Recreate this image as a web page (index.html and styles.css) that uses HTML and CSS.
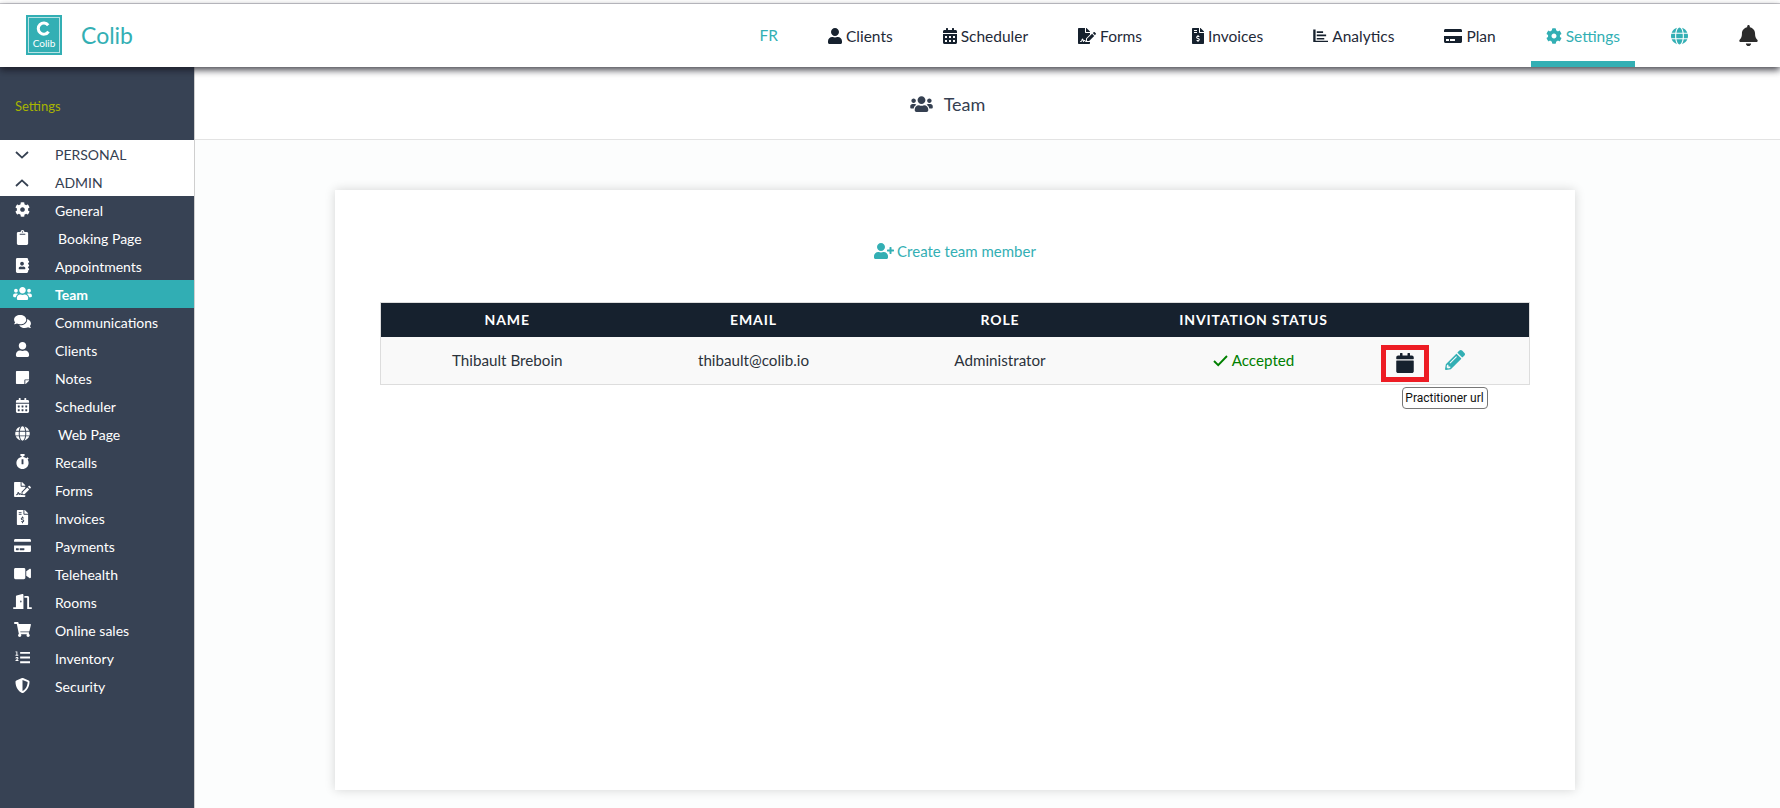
FILE: index.html
```html
<!DOCTYPE html>
<html lang="en">
<head>
<meta charset="utf-8">
<title>Colib - Team</title>
<link rel="stylesheet" href="styles.css">
</head>
<body>
<svg class="sprite" aria-hidden="true">
<symbol id="i-user" viewBox="0 0 448 512"><path d="M224 256c70.7 0 128-57.3 128-128S294.7 0 224 0 96 57.3 96 128s57.3 128 128 128zm89.6 32h-16.7c-22.2 10.2-46.9 16-72.9 16s-50.6-5.8-72.9-16h-16.7C60.2 288 0 348.2 0 422.4V464c0 26.5 21.5 48 48 48h352c26.5 0 48-21.5 48-48v-41.6c0-74.2-60.2-134.4-134.4-134.4z"/></symbol>
<symbol id="i-calalt" viewBox="0 0 448 512"><path d="M0 464c0 26.5 21.5 48 48 48h352c26.5 0 48-21.5 48-48V192H0v272zm320-196c0-6.6 5.4-12 12-12h40c6.6 0 12 5.4 12 12v40c0 6.6-5.4 12-12 12h-40c-6.6 0-12-5.4-12-12v-40zm0 128c0-6.6 5.4-12 12-12h40c6.6 0 12 5.4 12 12v40c0 6.6-5.4 12-12 12h-40c-6.6 0-12-5.4-12-12v-40zM192 268c0-6.6 5.4-12 12-12h40c6.6 0 12 5.4 12 12v40c0 6.6-5.4 12-12 12h-40c-6.6 0-12-5.4-12-12v-40zm0 128c0-6.6 5.4-12 12-12h40c6.6 0 12 5.4 12 12v40c0 6.6-5.4 12-12 12h-40c-6.6 0-12-5.4-12-12v-40zM64 268c0-6.6 5.4-12 12-12h40c6.6 0 12 5.4 12 12v40c0 6.6-5.4 12-12 12H76c-6.6 0-12-5.4-12-12v-40zm0 128c0-6.6 5.4-12 12-12h40c6.6 0 12 5.4 12 12v40c0 6.6-5.4 12-12 12H76c-6.6 0-12-5.4-12-12v-40zM400 64h-48V16c0-8.8-7.2-16-16-16h-32c-8.8 0-16 7.2-16 16v48H160V16c0-8.8-7.2-16-16-16h-32c-8.8 0-16 7.2-16 16v48H48C21.5 64 0 85.5 0 112v48h448v-48c0-26.5-21.5-48-48-48z"/></symbol>
<symbol id="i-cal" viewBox="0 0 448 512"><path d="M12 192h424c6.6 0 12 5.4 12 12v260c0 26.5-21.5 48-48 48H48c-26.5 0-48-21.5-48-48V204c0-6.6 5.4-12 12-12zm436-44v-36c0-26.5-21.5-48-48-48h-48V12c0-6.6-5.4-12-12-12h-40c-6.6 0-12 5.4-12 12v52H160V12c0-6.6-5.4-12-12-12h-40c-6.6 0-12 5.4-12 12v52H48C21.5 64 0 85.5 0 112v36c0 6.6 5.4 12 12 12h424c6.6 0 12-5.4 12-12z"/></symbol>
<symbol id="i-cog" viewBox="0 0 512 512"><path d="M487.4 315.7l-42.6-24.6c4.3-23.2 4.3-47 0-70.2l42.6-24.6c4.9-2.8 7.1-8.6 5.5-14-11.1-35.6-30-67.8-54.7-94.6-3.8-4.1-10-5.1-14.8-2.3L380.8 110c-17.9-15.4-38.5-27.3-60.8-35.1V25.8c0-5.6-3.9-10.5-9.4-11.7-36.7-8.2-74.3-7.8-109.2 0-5.5 1.2-9.4 6.1-9.4 11.7V75c-22.2 7.9-42.8 19.8-60.8 35.1L88.7 85.5c-4.9-2.8-11-1.9-14.8 2.3-24.7 26.7-43.6 58.9-54.7 94.6-1.7 5.4.6 11.2 5.5 14L67.3 221c-4.3 23.2-4.3 47 0 70.2l-42.6 24.6c-4.9 2.8-7.1 8.6-5.5 14 11.1 35.6 30 67.8 54.7 94.6 3.8 4.1 10 5.1 14.8 2.3l42.6-24.6c17.9 15.4 38.5 27.3 60.8 35.1v49.2c0 5.6 3.9 10.5 9.4 11.7 36.7 8.2 74.3 7.8 109.2 0 5.5-1.2 9.4-6.1 9.4-11.7v-49.2c22.2-7.9 42.8-19.8 60.8-35.1l42.6 24.6c4.9 2.8 11 1.9 14.8-2.3 24.7-26.7 43.6-58.9 54.7-94.6 1.5-5.5-.7-11.3-5.6-14.1zM256 336c-44.1 0-80-35.9-80-80s35.9-80 80-80 80 35.9 80 80-35.9 80-80 80z"/></symbol>
<symbol id="i-users" viewBox="0 0 640 512"><path d="M96 224c35.3 0 64-28.7 64-64s-28.7-64-64-64-64 28.7-64 64 28.7 64 64 64zm448 0c35.3 0 64-28.7 64-64s-28.7-64-64-64-64 28.7-64 64 28.7 64 64 64zm32 32h-64c-17.6 0-33.5 7.1-45.1 18.6 40.3 22.1 68.9 62 75.1 109.4h66c17.7 0 32-14.3 32-32v-32c0-35.3-28.7-64-64-64zm-256 0c61.9 0 112-50.1 112-112S381.9 32 320 32 208 82.1 208 144s50.1 112 112 112zm76.8 32h-8.3c-20.8 10-43.9 16-68.5 16s-47.6-6-68.5-16h-8.3C179.6 288 128 339.6 128 403.2V432c0 26.5 21.5 48 48 48h288c26.5 0 48-21.5 48-48v-28.8c0-63.6-51.6-115.2-115.2-115.2zm-223.7-13.4C161.5 263.1 145.6 256 128 256H64c-35.3 0-64 28.7-64 64v32c0 17.7 14.3 32 32 32h65.9c6.3-47.4 34.9-87.3 75.2-109.4z"/></symbol>
<symbol id="i-globe" viewBox="0 0 496 512"><path d="M336.5 160C322 70.7 287.8 8 248 8s-74 62.7-88.5 152h177zM152 256c0 22.2 1.2 43.5 3.3 64h185.3c2.1-20.5 3.3-41.8 3.3-64s-1.2-43.5-3.3-64H155.3c-2.1 20.5-3.3 41.8-3.3 64zm324.7-96c-28.6-67.9-86.5-120.4-158-141.6 24.4 33.8 41.2 84.7 50 141.6h108zM177.2 18.4C105.8 39.6 47.8 92.1 19.3 160h108c8.7-56.9 25.5-107.8 49.9-141.6zM487.4 192H372.7c2.1 21 3.3 42.5 3.3 64s-1.2 43-3.3 64h114.6c5.5-20.5 8.6-41.8 8.6-64s-3.1-43.5-8.5-64zM120 256c0-21.5 1.2-43 3.3-64H8.6C3.2 212.5 0 233.8 0 256s3.2 43.5 8.6 64h114.6c-2-21-3.2-42.5-3.2-64zm39.5 96c14.5 89.3 48.7 152 88.5 152s74-62.7 88.5-152h-177zm159.3 141.6c71.4-21.2 129.4-73.7 158-141.6h-108c-8.8 56.9-25.6 107.8-50 141.6zM19.3 352c28.6 67.9 86.5 120.4 158 141.6-24.4-33.8-41.2-84.7-50-141.6h-108z"/></symbol>
<symbol id="i-bell" viewBox="0 0 448 512"><path d="M224 512c35.32 0 63.97-28.65 63.97-64H160.03c0 35.35 28.65 64 63.97 64zm215.39-149.71c-19.32-20.76-55.47-51.99-55.47-154.29 0-77.7-54.48-139.9-127.94-155.16V32c0-17.67-14.32-32-31.98-32s-31.98 14.33-31.98 32v20.84C118.56 68.1 64.08 130.3 64.08 208c0 102.3-36.15 133.53-55.47 154.29-6 6.45-8.66 14.16-8.61 21.71.11 16.4 12.98 32 32.1 32h383.8c19.12 0 32-15.6 32.1-32 .05-7.55-2.61-15.27-8.61-21.71z"/></symbol>
<symbol id="i-card" viewBox="0 0 576 512"><path d="M0 432c0 26.5 21.5 48 48 48h480c26.5 0 48-21.5 48-48V256H0v176zm192-68c0-6.6 5.4-12 12-12h136c6.6 0 12 5.4 12 12v40c0 6.6-5.4 12-12 12H204c-6.6 0-12-5.4-12-12v-40zm-128 0c0-6.6 5.4-12 12-12h72c6.6 0 12 5.4 12 12v40c0 6.6-5.4 12-12 12H76c-6.6 0-12-5.4-12-12v-40zM576 80v48H0V80c0-26.5 21.5-48 48-48h480c26.5 0 48 21.5 48 48z"/></symbol>
<symbol id="i-pencil" viewBox="0 0 512 512"><path d="M497.9 142.1l-46.1 46.1c-4.7 4.7-12.3 4.7-17 0l-111-111c-4.7-4.7-4.7-12.3 0-17l46.1-46.1c18.7-18.7 49.1-18.7 67.9 0l60.1 60.1c18.8 18.7 18.8 49.1 0 67.9zM284.2 99.8L21.6 362.4.4 483.9c-2.9 16.4 11.4 30.6 27.8 27.8l121.5-21.3 262.6-262.6c4.7-4.7 4.7-12.3 0-17l-111-111c-4.8-4.7-12.4-4.7-17.1 0zM124.1 339.9c-5.5-5.5-5.5-14.3 0-19.8l154-154c5.5-5.5 14.3-5.5 19.8 0s5.5 14.3 0 19.8l-154 154c-5.5 5.5-14.3 5.5-19.8 0zM88 424h48v36.3l-64.5 11.3-31.1-31.1L51.7 376H88v48z"/></symbol>
<symbol id="i-check" viewBox="0 0 15 15"><path d="M1 8l4.2 4.2L14 3" fill="none" stroke="currentColor" stroke-width="1.9"/></symbol>
<symbol id="i-clip" viewBox="0 0 384 512"><path d="M384 112v352c0 26.51-21.49 48-48 48H48c-26.51 0-48-21.49-48-48V112c0-26.51 21.49-48 48-48h80c0-35.29 28.71-64 64-64s64 28.71 64 64h80c26.51 0 48 21.49 48 48zM192 40c-13.255 0-24 10.745-24 24s10.745 24 24 24 24-10.745 24-24-10.745-24-24-24m96 114v-20a6 6 0 0 0-6-6H102a6 6 0 0 0-6 6v20a6 6 0 0 0 6 6h180a6 6 0 0 0 6-6z"/></symbol>
<symbol id="i-book" viewBox="0 0 448 512"><path d="M436 160c6.6 0 12-5.4 12-12v-40c0-6.6-5.4-12-12-12h-20V48c0-26.5-21.5-48-48-48H48C21.5 0 0 21.5 0 48v416c0 26.5 21.5 48 48 48h320c26.5 0 48-21.5 48-48v-48h20c6.6 0 12-5.4 12-12v-40c0-6.6-5.4-12-12-12h-20v-64h20c6.6 0 12-5.4 12-12v-40c0-6.6-5.4-12-12-12h-20v-64h20zm-228-32c35.3 0 64 28.7 64 64s-28.7 64-64 64-64-28.7-64-64 28.7-64 64-64zm112 236.8c0 10.6-10 19.2-22.4 19.2H118.4C106 384 96 375.4 96 364.8v-19.2c0-31.8 30.1-57.6 67.2-57.6h5c12.3 5.1 25.7 8 39.8 8s27.6-2.9 39.8-8h5c37.1 0 67.2 25.8 67.2 57.6v19.2z"/></symbol>
<symbol id="i-comments" viewBox="0 0 576 512"><path d="M416 192c0-88.4-93.1-160-208-160S0 103.6 0 192c0 34.3 14.1 65.9 38 92-13.4 30.2-35.5 54.2-35.8 54.5-2.2 2.3-2.8 5.7-1.5 8.7S4.8 352 8 352c36.6 0 66.9-12.3 88.7-25 32.2 15.7 70.3 25 111.3 25 114.9 0 208-71.6 208-160zm122 220c23.9-26 38-57.7 38-92 0-66.9-53.5-124.2-129.3-148.1.9 6.6 1.3 13.3 1.3 20.1 0 105.9-107.7 192-240 192-10.8 0-21.3-.8-31.7-1.9C207.8 439.6 281.8 480 368 480c41 0 79.1-9.2 111.3-25 21.8 12.7 52.1 25 88.7 25 3.2 0 6.1-1.9 7.3-4.8 1.3-2.9.7-6.3-1.5-8.7-.3-.3-22.4-24.2-35.8-54.5z"/></symbol>
<symbol id="i-note" viewBox="0 0 448 512"><path d="M312 320h136V56c0-13.3-10.7-24-24-24H24C10.7 32 0 42.7 0 56v400c0 13.3 10.7 24 24 24h264V344c0-13.2 10.8-24 24-24zm129 55l-98 98c-4.5 4.5-10.6 7-17 7h-6V352h128v6.1c0 6.3-2.5 12.4-7 16.9z"/></symbol>
<symbol id="i-watch" viewBox="0 0 448 512"><path d="M432 304c0 114.9-93.1 208-208 208S16 418.9 16 304c0-104 76.3-190.2 176-205.5V64h-28c-6.6 0-12-5.4-12-12V12c0-6.6 5.4-12 12-12h120c6.6 0 12 5.4 12 12v40c0 6.6-5.4 12-12 12h-28v34.5c37.5 5.8 71.7 21.6 99.7 44.6l27.5-27.5c4.7-4.7 12.3-4.7 17 0l28.3 28.3c4.7 4.7 4.7 12.3 0 17l-29.4 29.4-.6.6C419.7 223.3 432 262.2 432 304zm-176 36V188.5c0-6.6-5.4-12-12-12h-40c-6.6 0-12 5.4-12 12V340c0 6.6 5.4 12 12 12h40c6.6 0 12-5.4 12-12z"/></symbol>
<symbol id="i-video" viewBox="0 0 576 512"><path d="M336.2 64H47.8C21.4 64 0 85.4 0 111.8v288.4C0 426.6 21.4 448 47.8 448h288.4c26.4 0 47.8-21.4 47.8-47.8V111.8c0-26.4-21.4-47.8-47.8-47.8zm189.4 37.7L416 177.3v157.4l109.6 75.5c21.2 14.6 50.4-.3 50.4-25.8V127.5c0-25.4-29.1-40.4-50.4-25.8z"/></symbol>
<symbol id="i-cart" viewBox="0 0 576 512"><path d="M528.12 301.319l47.273-208C578.806 78.301 567.391 64 551.99 64H159.208l-9.166-44.81C147.758 8.021 137.93 0 126.529 0H24C10.745 0 0 10.745 0 24v16c0 13.255 10.745 24 24 24h69.883l70.248 343.435C147.325 417.1 136 435.222 136 456c0 30.928 25.072 56 56 56s56-25.072 56-56c0-15.674-6.447-29.835-16.824-40h209.647C430.447 426.165 424 440.326 424 456c0 30.928 25.072 56 56 56s56-25.072 56-56c0-22.172-12.888-41.332-31.579-50.405l5.517-24.276c3.413-15.018-8.002-29.319-23.403-29.319H218.117l-6.545-32h293.145c11.206 0 20.92-7.754 23.403-18.681z"/></symbol>
<symbol id="i-list" viewBox="0 0 512 512"><path d="M48 48h32v112h32v32H16v-32h32V80H16V48zM176 64h336v64H176zM176 224h336v64H176zM176 384h336v64H176zM16 288c0-30 25-48 52-48 28 0 50 18 50 44 0 22-14 36-32 48l-16 12h48v32H16v-28l44-36c12-10 20-18 20-28 0-8-6-14-14-14-10 0-16 8-16 20H16z"/></symbol>
<symbol id="i-shield" viewBox="0 0 512 512"><path d="M466.5 83.7l-192-80a48.15 48.15 0 0 0-36.9 0l-192 80C27.7 91.1 16 108.6 16 128c0 198.5 114.5 335.7 221.5 380.3 11.8 4.9 25.1 4.9 36.9 0C360.1 472.6 496 349.3 496 128c0-19.4-11.7-36.9-29.5-44.3zM256.1 446.3l-.1-381 175.9 73.3c-3.3 151.4-82.1 261.1-175.8 307.7z"/></symbol>
<symbol id="i-inv" viewBox="0 0 384 512"><path d="M377 105L279.1 7c-4.5-4.5-10.6-7-17-7H256v128h128v-6.1c0-6.3-2.5-12.4-7-16.9zm-153 31V0H24C10.7 0 0 10.7 0 24v464c0 13.3 10.7 24 24 24h336c13.3 0 24-10.7 24-24V160H248c-13.2 0-24-10.8-24-24zM64 72c0-4.42 3.58-8 8-8h80c4.42 0 8 3.58 8 8v16c0 4.42-3.58 8-8 8H72c-4.42 0-8-3.58-8-8V72zm0 80v-16c0-4.42 3.58-8 8-8h80c4.42 0 8 3.58 8 8v16c0 4.42-3.58 8-8 8H72c-4.42 0-8-3.58-8-8zm144 263.88V440c0 4.42-3.58 8-8 8h-16c-4.42 0-8-3.58-8-8v-24.29c-11.29-.58-22.27-4.52-31.37-11.35-3.9-2.93-4.1-8.77-.57-12.14l11.75-11.21c2.77-2.64 6.89-2.76 10.13-.73 3.87 2.42 8.26 3.72 12.82 3.72h28.11c6.5 0 11.8-5.92 11.8-13.19 0-5.95-3.61-11.19-8.77-12.73l-45-13.5c-18.59-5.58-31.58-23.42-31.58-43.39 0-24.52 19.05-44.44 42.67-45.07V232c0-4.42 3.58-8 8-8h16c4.42 0 8 3.58 8 8v24.29c11.29.58 22.27 4.51 31.37 11.35 3.9 2.93 4.1 8.77.57 12.14l-11.75 11.21c-2.77 2.64-6.89 2.76-10.13.73-3.87-2.43-8.26-3.72-12.82-3.72h-28.11c-6.5 0-11.8 5.92-11.8 13.19 0 5.95 3.61 11.19 8.77 12.73l45 13.5c18.59 5.58 31.58 23.42 31.58 43.39 0 24.53-19.05 44.44-42.67 45.07z"/></symbol>
<symbol id="i-sign" viewBox="0 0 576 512"><path d="M218.17 424.14c-2.95-5.92-8.09-6.52-10.17-6.52s-7.22.59-10.02 6.19l-7.67 15.34c-6.37 12.78-25.03 11.37-29.48-2.09L144 386.59l-10.61 31.88c-5.89 17.66-22.38 29.53-41 29.53H80c-8.84 0-16-7.16-16-16s7.16-16 16-16h12.39c4.83 0 9.11-3.08 10.64-7.66l18.19-54.64c3.3-9.81 12.44-16.41 22.78-16.41s19.48 6.59 22.77 16.41l13.88 41.64c19.75-16.19 54.06-9.7 66 14.16 1.89 3.78 5.49 5.95 9.36 6.26v-82.12l128-127.09V160H248c-13.2 0-24-10.8-24-24V0H24C10.7 0 0 10.7 0 24v464c0 13.3 10.7 24 24 24h336c13.3 0 24-10.7 24-24v-40l-128-.11c-16.12-.31-30.58-9.28-37.83-23.75zM384 121.9c0-6.3-2.5-12.4-7-16.9L279.1 7c-4.5-4.5-10.6-7-17-7H256v128h128v-6.1zm-96 225.06V416h68.99l161.68-162.78-67.88-67.88L288 346.96zm280.54-179.63l-31.87-31.87c-9.94-9.94-26.07-9.94-36.01 0l-27.25 27.25 67.88 67.88 27.25-27.25c9.95-9.94 9.95-26.07 0-36.01z"/></symbol>
<symbol id="i-door" viewBox="0 0 640 512"><path d="M624 448h-80V113.45C544 86.19 522.47 64 496 64H384v64h96v384h144c8.84 0 16-7.16 16-16v-32c0-8.84-7.16-16-16-16zM312.24 1.01l-192 49.74C105.99 54.44 96 67.7 96 82.92V448H16c-8.84 0-16 7.16-16 16v32c0 8.84 7.16 16 16 16h336V33.18c0-21.58-19.56-37.41-39.76-32.17zM264 288c-13.25 0-24-14.33-24-32s10.75-32 24-32 24 14.33 24 32-10.75 32-24 32z"/></symbol>
<symbol id="i-chart" viewBox="0 0 512 512"><path d="M48 32h40v384h424v48H24c-8 0-16-8-16-16V32zM128 96h216v56H128zM128 208h320v56H128zM128 320h256v56H128z"/></symbol>
<symbol id="i-userplus" viewBox="0 0 640 512"><path d="M624 208h-64v-64c0-8.8-7.2-16-16-16h-32c-8.8 0-16 7.2-16 16v64h-64c-8.8 0-16 7.2-16 16v32c0 8.8 7.2 16 16 16h64v64c0 8.8 7.2 16 16 16h32c8.8 0 16-7.2 16-16v-64h64c8.8 0 16-7.2 16-16v-32c0-8.8-7.2-16-16-16zm-400 48c70.7 0 128-57.3 128-128S294.7 0 224 0 96 57.3 96 128s57.3 128 128 128zm89.6 32h-16.7c-22.2 10.2-46.9 16-72.9 16s-50.6-5.8-72.9-16h-16.7C60.2 288 0 348.2 0 422.4V464c0 26.5 21.5 48 48 48h352c26.5 0 48-21.5 48-48v-41.6c0-74.2-60.2-134.4-134.4-134.4z"/></symbol>
<symbol id="i-down" viewBox="0 0 14 8"><path d="M1 1l6 5.6L13 1" fill="none" stroke="currentColor" stroke-width="1.8"/></symbol>
<symbol id="i-up" viewBox="0 0 14 8"><path d="M1 7l6-5.6L13 7" fill="none" stroke="currentColor" stroke-width="1.8"/></symbol>
</svg>

<div class="topline"></div>
<header class="topbar">
  <a class="brand">
    <span class="logo">
      <span class="logo-frame">
        <svg class="logo-c" viewBox="0 0 20 20"><path d="M15.6 5.6A7.4 7.4 0 1 0 16 14.2" fill="none" stroke="#fff" stroke-width="4"/></svg>
        <span class="logo-text">Colib</span>
      </span>
    </span>
    <span class="brand-name">Colib</span>
  </a>
  <nav class="nav">
    <a class="nav-item lang">FR</a>
    <a class="nav-item"><svg class="ic w14"><use href="#i-user"/></svg>Clients</a>
    <a class="nav-item"><svg class="ic w14"><use href="#i-calalt"/></svg>Scheduler</a>
    <a class="nav-item"><svg class="ic w18"><use href="#i-sign"/></svg>Forms</a>
    <a class="nav-item"><svg class="ic w12"><use href="#i-inv"/></svg>Invoices</a>
    <a class="nav-item"><svg class="ic w15"><use href="#i-chart"/></svg>Analytics</a>
    <a class="nav-item"><svg class="ic w18"><use href="#i-card"/></svg>Plan</a>
    <a class="nav-item active"><svg class="ic w16"><use href="#i-cog"/></svg>Settings</a>
    <a class="nav-item teal"><svg class="ic w17 solo"><use href="#i-globe"/></svg></a>
    <a class="nav-item bell"><svg class="ic w19 solo tall"><use href="#i-bell"/></svg></a>
  </nav>
</header>

<div class="layout">
  <aside class="sidebar">
    <div class="side-title">Settings</div>
    <ul class="side-list">
      <li class="side-group"><span class="slot"><svg class="chev"><use href="#i-down"/></svg></span>PERSONAL</li>
      <li class="side-group"><span class="slot"><svg class="chev"><use href="#i-up"/></svg></span>ADMIN</li>
      <li class="side-row"><span class="slot"><svg class="si"><use href="#i-cog"/></svg></span>General</li>
      <li class="side-row"><span class="slot"><svg class="si"><use href="#i-clip"/></svg></span><span class="shift">Booking Page</span></li>
      <li class="side-row"><span class="slot"><svg class="si"><use href="#i-book"/></svg></span>Appointments</li>
      <li class="side-row current"><span class="slot"><svg class="si wide"><use href="#i-users"/></svg></span>Team</li>
      <li class="side-row"><span class="slot"><svg class="si wide"><use href="#i-comments"/></svg></span>Communications</li>
      <li class="side-row"><span class="slot"><svg class="si"><use href="#i-user"/></svg></span>Clients</li>
      <li class="side-row"><span class="slot"><svg class="si"><use href="#i-note"/></svg></span>Notes</li>
      <li class="side-row"><span class="slot"><svg class="si"><use href="#i-calalt"/></svg></span>Scheduler</li>
      <li class="side-row"><span class="slot"><svg class="si"><use href="#i-globe"/></svg></span><span class="shift">Web Page</span></li>
      <li class="side-row"><span class="slot"><svg class="si"><use href="#i-watch"/></svg></span>Recalls</li>
      <li class="side-row"><span class="slot"><svg class="si wide"><use href="#i-sign"/></svg></span>Forms</li>
      <li class="side-row"><span class="slot"><svg class="si"><use href="#i-inv"/></svg></span>Invoices</li>
      <li class="side-row"><span class="slot"><svg class="si wide"><use href="#i-card"/></svg></span>Payments</li>
      <li class="side-row"><span class="slot"><svg class="si wide"><use href="#i-video"/></svg></span>Telehealth</li>
      <li class="side-row"><span class="slot"><svg class="si wide"><use href="#i-door"/></svg></span>Rooms</li>
      <li class="side-row"><span class="slot"><svg class="si wide"><use href="#i-cart"/></svg></span>Online sales</li>
      <li class="side-row"><span class="slot"><svg class="si"><use href="#i-list"/></svg></span>Inventory</li>
      <li class="side-row"><span class="slot"><svg class="si"><use href="#i-shield"/></svg></span>Security</li>
    </ul>
  </aside>

  <main class="content">
    <div class="page-head">
      <svg class="head-ic"><use href="#i-users"/></svg>
      <h1 class="page-title">Team</h1>
    </div>
    <div class="page-body">
      <section class="card">
        <a class="create"><svg class="create-ic"><use href="#i-userplus"/></svg>Create team member</a>
        <table class="team">
          <colgroup>
            <col class="c1"><col class="c2"><col class="c3"><col class="c4"><col class="c5">
          </colgroup>
          <thead>
            <tr><th>NAME</th><th>EMAIL</th><th>ROLE</th><th>INVITATION STATUS</th><th></th></tr>
          </thead>
          <tbody>
            <tr>
              <td>Thibault Breboin</td>
              <td>thibault@colib.io</td>
              <td>Administrator</td>
              <td class="ok"><svg class="check"><use href="#i-check"/></svg>Accepted</td>
              <td class="actions">
                <span class="mark">
                  <svg class="cal"><use href="#i-cal"/></svg>
                  <span class="tip">Practitioner url</span>
                </span>
                <svg class="pen"><use href="#i-pencil"/></svg>
              </td>
            </tr>
          </tbody>
        </table>
      </section>
    </div>
  </main>
</div>
</body>
</html>
```
FILE: styles.css
```css
* { box-sizing: border-box; }
html, body { height: 100%; }
body {
  margin: 0;
  height: 808px;
  overflow: hidden;
  background: #fff;
  font-family: Lato, "Open Sans", sans-serif;
  color: #354051;
  display: flex;
  flex-direction: column;
}
.sprite { position: absolute; width: 0; height: 0; }
svg { fill: currentColor; display: block; flex: none; }

.topline { height: 4px; background: #fff; border-bottom: 1px solid #cfcfd3; flex: none; }

.topbar {
  flex: none;
  height: 63px;
  display: flex;
  align-items: stretch;
  background: #fff;
  position: relative;
  z-index: 5;
  box-shadow: 0 3px 7px rgba(20, 20, 30, .8);
}
.brand { display: flex; align-items: center; padding-left: 26px; gap: 19px; }
.logo {
  width: 36px; height: 40px;
  background: #33afb4;
  padding: 2px;
  display: flex;
  margin-top: -2px;
}
.logo-frame {
  flex: 1;
  border: 1px solid rgba(255, 255, 255, .65);
  display: flex;
  flex-direction: column;
  align-items: center;
  padding-top: 3px;
}
.logo-c { width: 16px; height: 15px; }
.logo-text { font-size: 10px; line-height: 12px; color: #fff; margin-top: 1px; }
.brand-name { font-size: 23px; color: #33afb4; margin-top: -2px; }

.nav { margin-left: auto; display: flex; align-items: stretch; padding-right: 7px; font-size: 15.5px; color: #1f2a38; }
.nav-item {
  display: flex;
  align-items: center;
  gap: 4px;
  padding: 1px 15px 0;
  margin-left: 20px;
}
.nav-item .ic { color: #16212e; height: 16px; margin-top: -1px; }
.nav-item.lang { color: #33afb4; margin-left: 0; padding-top: 0; padding-bottom: 2px; }
.active { color: #33afb4; border-bottom: 6px solid #33afb4; padding-top: 7px; }
.nav-item.teal, .nav-item.bell { margin-left: 21px; }
.nav-item.active .ic, .nav-item.teal .ic { color: #33afb4; }
.nav-item.bell .ic { color: #2b2b2b; }
.nav-item .solo { height: 18px; }
.nav-item .tall { height: 21px; }
.w12 { width: 12px; }
.w14 { width: 14px; }
.w15 { width: 15px; }
.w16 { width: 16px; }
.w17 { width: 17px; }
.w18 { width: 18px; }
.w19 { width: 19px; }

.layout { flex: 1; display: flex; min-height: 0; }
.sidebar {
  flex: none;
  width: 195px;
  background: #374254;
  border-right: 1px solid #cfcfcf;
  color: #fff;
  font-size: 14px;
}
.side-title {
  height: 73px;
  display: flex;
  align-items: center;
  padding: 5px 0 0 15px;
  font-size: 13px;
  color: #a7b400;
}
.side-list { list-style: none; margin: 0; padding: 0; }
.side-group, .side-row {
  height: 28px;
  display: flex;
  align-items: center;
  padding: 1px 0 0 7px;
}
.side-group { background: #fff; color: #354051; }
.slot { width: 30px; margin-right: 18px; display: flex; justify-content: center; flex: none; }
.shift { margin-left: 3px; }
.current { background: #31aeb4; font-weight: 700; }
.si { width: 15px; height: 15px; margin-top: -2px; }
.si.wide { width: 19px; }
.chev { width: 14px; height: 8px; }

.content { flex: 1; min-width: 0; display: flex; flex-direction: column; background: #fcfdfd; }
.page-head {
  flex: none;
  height: 73px;
  background: #fff;
  border-bottom: 1px solid #e3e3e3;
  display: flex;
  align-items: center;
  justify-content: center;
  gap: 11px;
  padding: 2px 80px 0 0;
  color: #354051;
}
.head-ic { width: 23px; height: 18px; }
.page-title { margin: 0; font-size: 18px; font-weight: 400; }

.page-body { flex: 1; padding: 50px 205px 0 140px; }
.card {
  height: 600px;
  background: #fff;
  box-shadow: 0 0 10px rgba(0, 0, 0, .16);
  padding: 0 45px;
}
.create {
  height: 112px;
  display: flex;
  align-items: center;
  justify-content: center;
  gap: 3px;
  padding-top: 10px;
  color: #33afb4;
  font-size: 15px;
}
.create-ic { width: 20px; height: 16px; }

.team { width: 100%; border-collapse: collapse; table-layout: fixed; font-size: 15.2px; color: #2b323b; border: 1px solid #ddd; }
.c1 { width: 253px; }
.c2 { width: 240px; }
.c3 { width: 253px; }
.c4 { width: 254px; }
.team th {
  height: 34px;
  padding: 0;
  background: #16212e;
  color: #fff;
  font-size: 14px;
  font-weight: 700;
  letter-spacing: .9px;
  text-align: center;
}
.team td { height: 48px; padding: 0; background: #f9f9f9; text-align: center; }
.team td.ok { color: #008000; }
.check { display: inline-block; width: 15px; height: 15px; margin-right: 4px; vertical-align: -2px; }
.team td.actions { text-align: left; }
.mark {
  position: relative;
  display: inline-flex;
  align-items: center;
  justify-content: center;
  width: 48px;
  height: 37px;
  border: 5px solid #ed1c24;
  vertical-align: middle;
  margin: 6px 13px 0 0;
}
.cal { width: 18px; height: 20px; color: #16212e; }
.pen { display: inline-block; width: 20px; height: 20px; color: #33afb4; vertical-align: middle; }
.tip {
  position: absolute;
  left: 16px;
  top: 37px;
  width: 86px;
  height: 22px;
  border: 1px solid #777;
  border-radius: 4px;
  background: #fff;
  color: #111;
  font-family: Roboto, sans-serif;
  font-size: 12px;
  line-height: 20px;
  text-align: center;
  white-space: nowrap;
}
```
